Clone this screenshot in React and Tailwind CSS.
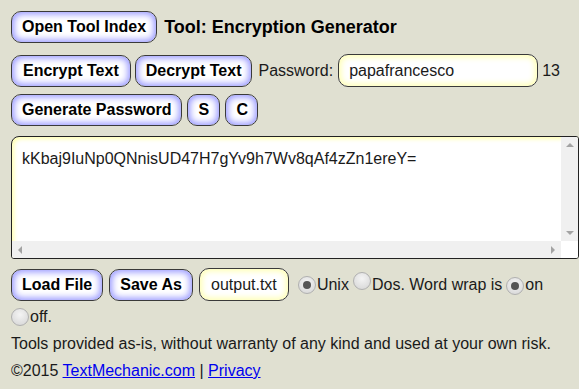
import React from "react";

const btn =
  "h-[32px] px-[10px] rounded-[10px] border border-[#3a3a3a] bg-white shadow-[inset_0_0_7px_2px_#9494ff] font-bold text-[16px] text-black leading-none";

function Radio({ checked }) {
  return (
    <span className="inline-flex w-[18px] h-[18px] rounded-full border border-[#b0b0b0] bg-[radial-gradient(circle_at_50%_35%,#f4f4f4,#d4d4d4)] items-center justify-center shrink-0">
      {checked && <span className="w-[8px] h-[8px] rounded-full bg-[#555]" />}
    </span>
  );
}

export default function App() {
  return (
    <div className="w-[579px] h-[389px] bg-[#e0e0d1] text-[16px] text-[#1a1a1a] overflow-hidden font-['Liberation_Sans',Arial,sans-serif]">
      <div className="pl-[11px] pt-[11px]">
        <div className="flex items-center gap-[7px]">
          <button className={btn}>Open Tool Index</button>
          <span className="font-bold text-[18px] text-black">Tool: Encryption Generator</span>
        </div>
        <div className="flex items-center mt-[11px]">
          <button className={btn + " px-[11px]"}>Encrypt Text</button>
          <button className={btn + " ml-[4px]"}>Decrypt Text</button>
          <span className="ml-[6px]">Password:</span>
          <div className="ml-[5px] w-[200px] h-[33px] rounded-[10px] border border-[#3a3a3a] bg-white shadow-[inset_0_0_6px_2px_#ffffb0] flex items-center pl-[10px]">
            papafrancesco
          </div>
          <span className="ml-[4px]">13</span>
        </div>
        <div className="flex items-center mt-[7px] gap-[5px]">
          <button className={btn}>Generate Password</button>
          <button className={btn + " w-[33px] px-0"}>S</button>
          <button className={btn + " w-[33px] px-0"}>C</button>
        </div>
        <div className="mt-[10px] w-[568px] h-[123px] rounded-tl-[8px] rounded-[3px] border border-[#222] bg-white shadow-[inset_2px_2px_4px_#ffffb0] flex flex-col overflow-hidden">
          <div className="flex flex-1 min-h-0">
            <div className="flex-1 pl-[10px] pt-[10px]">kKbaj9IuNp0QNnisUD47H7gYv9h7Wv8qAf4zZn1ereY=</div>
            <div className="w-[17px] bg-[#f0f0f0] flex flex-col items-center justify-between py-[6px]">
              <span className="w-0 h-0 border-x-[4px] border-x-transparent border-b-[4px] border-b-[#a3a3a3]" />
              <span className="w-0 h-0 border-x-[4px] border-x-transparent border-t-[4px] border-t-[#a3a3a3]" />
            </div>
          </div>
          <div className="flex h-[17px]">
            <div className="flex-1 bg-[#f0f0f0] flex items-center justify-between px-[6px]">
              <span className="w-0 h-0 border-y-[4px] border-y-transparent border-r-[4px] border-r-[#a3a3a3]" />
              <span className="w-0 h-0 border-y-[4px] border-y-transparent border-l-[4px] border-l-[#a3a3a3]" />
            </div>
            <div className="w-[17px] bg-white" />
          </div>
        </div>
        <div className="flex items-center mt-[9px]">
          <button className={btn}>Load File</button>
          <button className={btn + " ml-[6px]"}>Save As</button>
          <div className="ml-[6px] w-[90px] h-[33px] rounded-[10px] border border-[#3a3a3a] bg-white shadow-[inset_0_0_6px_2px_#ffffb0] flex items-center justify-center">
            output.txt
          </div>
          <span className="ml-[9px] flex items-center">
            <Radio checked />
            <span className="ml-[1px]">Unix</span>
            <span className="ml-[4px]"><Radio /></span>
            <span className="ml-[1px]">Dos. Word wrap is</span>
            <span className="ml-[4px]"><Radio checked /></span>
            <span className="ml-[1px]">on</span>
          </span>
        </div>
        <div className="flex items-center mt-[4px]">
          <Radio />
          <span className="ml-[1px]">off.</span>
        </div>
        <div className="mt-[3px]">Tools provided as-is, without warranty of any kind and used at your own risk.</div>
        <div className="mt-[3px]">
          ©2015 <a className="text-[#0000ee] underline">TextMechanic.com</a> | <a className="text-[#0000ee] underline">Privacy</a>
        </div>
      </div>
    </div>
  );
}
